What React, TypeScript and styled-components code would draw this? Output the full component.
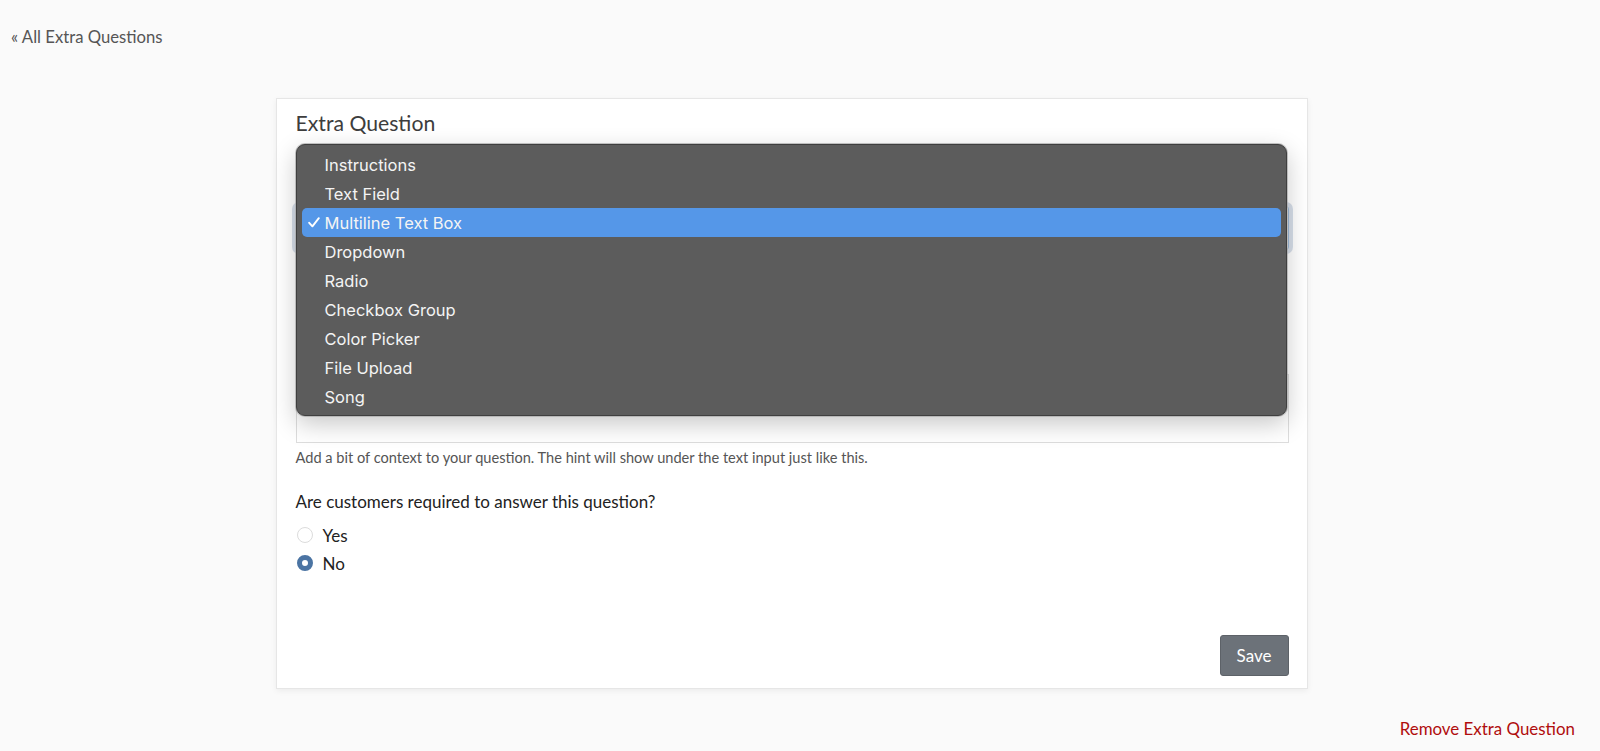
import React from "react";
import styled, { createGlobalStyle } from "styled-components";

const GlobalStyle = createGlobalStyle`
  html, body {
    margin: 0;
    padding: 0;
    background: #fafafa;
  }
  body {
    font-family: Lato, "Noto Sans", "Liberation Sans", sans-serif;
    color: #222;
  }
  * { box-sizing: border-box; }
`;

const Page = styled.div`
  min-height: 751px;
  padding: 26px 25px 0 11px;
  display: flex;
  flex-direction: column;
`;

const BackLink = styled.a`
  align-self: flex-start;
  font-size: 16.7px;
  line-height: 22px;
  color: #555;
  text-decoration: none;
`;

const CardArea = styled.div`
  margin-top: 50px;
  padding-right: 3px;
  display: flex;
  justify-content: center;
`;

const Card = styled.section`
  position: relative;
  width: 1032px;
  background: #fff;
  border: 1px solid #e6e6e6;
  box-shadow: 0 2px 6px rgba(0, 0, 0, 0.06);
  padding: 12px 18px 12px 19px;
  display: flex;
  flex-direction: column;
`;

const Heading = styled.h2`
  margin: 0 0 43px;
  font-size: 21.2px;
  line-height: 24px;
  font-weight: 400;
  color: #3d3d3d;
`;

const Field = styled.div<{ $gap?: number }>`
  display: flex;
  flex-direction: column;
  gap: 6px;
  margin-bottom: ${(p) => p.$gap ?? 16}px;
`;

/* label slot of a field; its caption sits under the open popup */
const LabelSlot = styled.span`
  display: block;
  height: 22px;
`;

const SelectBox = styled.div`
  height: 44px;
  border: 1px solid #9db8d6;
  border-radius: 3px;
  box-shadow: 0 0 0 4px rgba(175, 192, 214, 0.5);
  background: #fff;
`;

const TextInput = styled.div`
  height: 36px;
  margin-right: 3px;
  border: 1px solid #ddd;
  background: #fff;
`;

const TextArea = styled.div`
  height: 69px;
  border: 1px solid #ddd;
  background: #fff;
`;

const HintText = styled.p`
  margin: 5px 0 0;
  font-size: 14.6px;
  line-height: 20px;
  color: #555;
`;

const Question = styled.p`
  margin: 23px 0 10px;
  font-size: 17px;
  line-height: 22px;
  color: #222;
`;

const RadioList = styled.div`
  display: flex;
  flex-direction: column;
  gap: 4px;
`;

const RadioRow = styled.label`
  display: flex;
  align-items: center;
  gap: 10px;
  height: 24px;
  padding-left: 1px;
  font-size: 17px;
  color: #222;
`;

const RadioDot = styled.span<{ $checked?: boolean }>`
  width: 16px;
  height: 16px;
  border-radius: 50%;
  flex: none;
  background: #fff;
  border: ${(p) => (p.$checked ? "5px solid #4b74a3" : "1px solid #dcdcdc")};
`;

const Footer = styled.div`
  margin-top: 60px;
  display: flex;
  justify-content: flex-end;
`;

const SaveButton = styled.button`
  width: 69px;
  height: 41px;
  background: #6c7279;
  border: 1px solid #5d6268;
  border-radius: 3px;
  color: #fff;
  font-family: inherit;
  font-size: 17px;
`;

const RemoveLink = styled.a`
  align-self: flex-end;
  margin-top: 29px;
  font-size: 16.9px;
  line-height: 22px;
  color: #b00d0d;
  text-decoration: none;
`;

/* native popup list opened over the type select */
const PopupMenu = styled.div`
  position: absolute;
  left: 19px;
  right: 20px;
  top: 45px;
  height: 272px;
  padding: 5px 5px 4px;
  border-radius: 9px;
  background: #5c5c5c;
  border: 1px solid #3f3f3f;
  box-shadow: 0 0 0 1px rgba(170, 170, 170, 0.7), 0 8px 24px rgba(0, 0, 0, 0.22);
  font-family: Inter, "Noto Sans", sans-serif;
`;

const MenuItem = styled.div<{ $selected?: boolean }>`
  height: 29px;
  display: grid;
  grid-template-columns: 23px 1fr;
  align-items: center;
  border-radius: 5px;
  font-size: 16.5px;
  color: #f4f4f4;
  background: ${(p) => (p.$selected ? "#5597e8" : "transparent")};
`;

const CheckSlot = styled.span`
  display: flex;
  justify-content: center;
  align-items: center;
  padding-left: 1px;
`;

const CheckMark = () => (
  <svg width="12" height="11" viewBox="0 0 12 11" aria-hidden="true">
    <path d="M1.2 5.8 L4.4 9.3 L10.8 1.2" fill="none" stroke="#fff" strokeWidth="1.9" strokeLinecap="round" strokeLinejoin="round" />
  </svg>
);

const types = [
  "Instructions",
  "Text Field",
  "Multiline Text Box",
  "Dropdown",
  "Radio",
  "Checkbox Group",
  "Color Picker",
  "File Upload",
  "Song",
];
const selectedType = "Multiline Text Box";

export default function App() {
  return (
    <>
      <GlobalStyle />
      <Page>
        <BackLink href="#">« All Extra Questions</BackLink>
        <CardArea>
          <Card>
            <Heading>Extra Question</Heading>
            <Field>
              <LabelSlot />
              <SelectBox />
            </Field>
            <Field>
              <LabelSlot />
              <TextInput />
            </Field>
            <Field $gap={0}>
              <LabelSlot />
              <TextArea />
            </Field>
            <HintText>
              Add a bit of context to your question. The hint will show under the text input just like this.
            </HintText>
            <Question>Are customers required to answer this question?</Question>
            <RadioList>
              <RadioRow>
                <RadioDot />
                Yes
              </RadioRow>
              <RadioRow>
                <RadioDot $checked />
                No
              </RadioRow>
            </RadioList>
            <Footer>
              <SaveButton>Save</SaveButton>
            </Footer>
            <PopupMenu>
              {types.map((t) => (
                <MenuItem key={t} $selected={t === selectedType}>
                  <CheckSlot>{t === selectedType ? <CheckMark /> : null}</CheckSlot>
                  <span>{t}</span>
                </MenuItem>
              ))}
            </PopupMenu>
          </Card>
        </CardArea>
        <RemoveLink href="#">Remove Extra Question</RemoveLink>
      </Page>
    </>
  );
}
